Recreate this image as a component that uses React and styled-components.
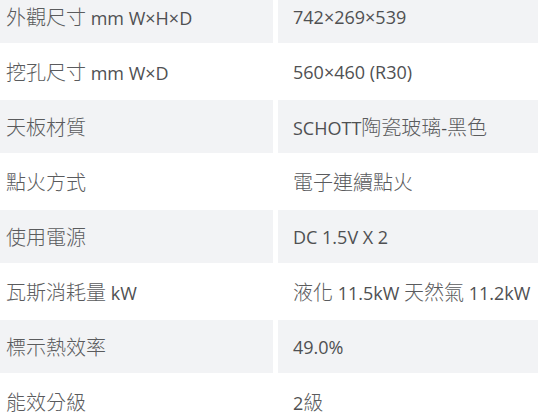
import React from "react";
import styled, { createGlobalStyle } from "styled-components";

const Global = createGlobalStyle`
  html, body { margin: 0; padding: 0; background: #fff; overflow: hidden; }
  body { font-family: "Open Sans", "Noto Sans CJK TC", sans-serif; }
`;

const Table = styled.div`
  display: flex;
  flex-direction: column;
  gap: 2px;
  margin: -10px 0 0 -9px;
  width: calc(100% + 9px);
`;

const Row = styled.div`
  display: grid;
  grid-template-columns: 282px 1fr;
  column-gap: 5px;
  height: 53px;
`;

const Cell = styled.div`
  display: flex;
  align-items: center;
  padding: 0 15px;
  background: ${(p) => (p.$shade ? "#f2f3f5" : "#ffffff")};
  color: #4f5052;
  font-family: "Open Sans", "Noto Sans CJK TC", sans-serif;
  font-size: 18px;
  font-weight: 500;
  white-space: nowrap;
  line-height: 1;
`;

const Han = styled.span`
  font-family: "Noto Sans CJK TC", sans-serif;
  font-size: 20px;
  font-weight: 300;
  color: #5a5b5d;
`;

const rows = [
  ["外觀尺寸 mm W×H×D", "742×269×539"],
  ["挖孔尺寸 mm W×D", "560×460 (R30)"],
  ["天板材質", "SCHOTT陶瓷玻璃-黑色"],
  ["點火方式", "電子連續點火"],
  ["使用電源", "DC 1.5V X 2"],
  ["瓦斯消耗量 kW", "液化 11.5kW 天然氣 11.2kW"],
  ["標示熱效率", "49.0%"],
  ["能效分級", "2級"],
];

function Mixed({ text }) {
  const parts = text.split(/([\u3400-\u9fff]+)/).filter(Boolean);
  return (
    <span>
      {parts.map((part, i) =>
        /[\u3400-\u9fff]/.test(part) ? <Han key={i}>{part}</Han> : <React.Fragment key={i}>{part}</React.Fragment>
      )}
    </span>
  );
}

export default function App() {
  return (
    <>
      <Global />
      <Table>
        {rows.map(([label, value], i) => (
          <Row key={label}>
            <Cell $shade={i % 2 === 0}>
              <Mixed text={label} />
            </Cell>
            <Cell $shade={i % 2 === 0}>
              <Mixed text={value} />
            </Cell>
          </Row>
        ))}
      </Table>
    </>
  );
}
